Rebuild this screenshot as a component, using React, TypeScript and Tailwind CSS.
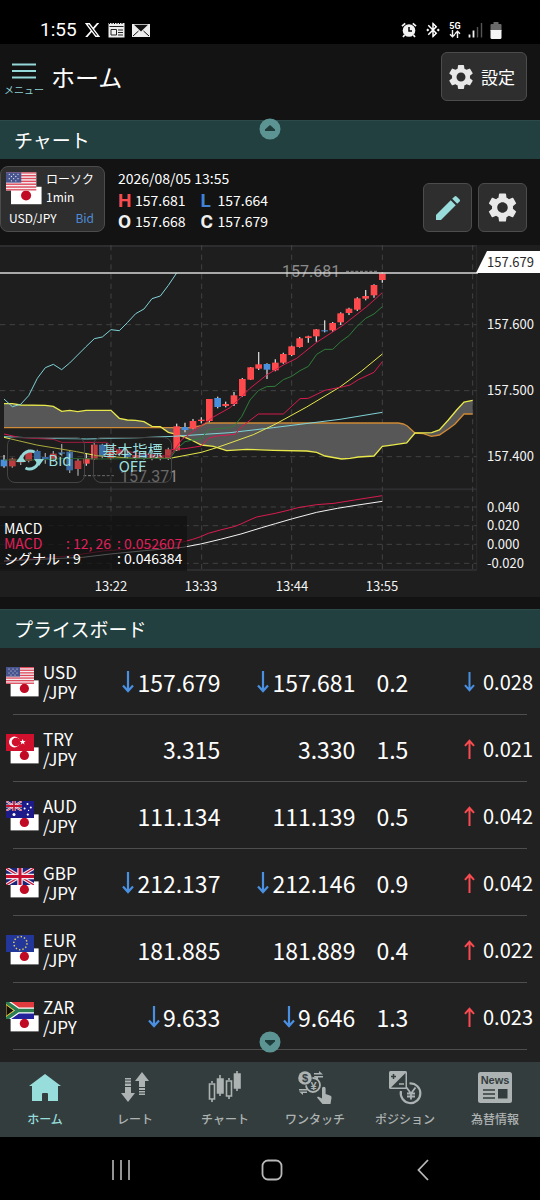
import type { ReactNode } from "react";
import { FaXTwitter } from "react-icons/fa6";
import { MdBluetoothConnected, MdEdit, MdSettings } from "react-icons/md";

type Dir = "up" | "down";
type Code = "USD" | "TRY" | "AUD" | "GBP" | "EUR" | "ZAR";
type Row = {
  code: Code;
  bid: string;
  ask: string;
  tick?: Dir;
  spread: string;
  dir: Dir;
  change: string;
};

const ROWS: Row[] = [
  { code: "USD", bid: "157.679", ask: "157.681", tick: "down", spread: "0.2", dir: "down", change: "0.028" },
  { code: "TRY", bid: "3.315", ask: "3.330", spread: "1.5", dir: "up", change: "0.021" },
  { code: "AUD", bid: "111.134", ask: "111.139", spread: "0.5", dir: "up", change: "0.042" },
  { code: "GBP", bid: "212.137", ask: "212.146", tick: "down", spread: "0.9", dir: "up", change: "0.042" },
  { code: "EUR", bid: "181.885", ask: "181.889", spread: "0.4", dir: "up", change: "0.022" },
  { code: "ZAR", bid: "9.633", ask: "9.646", tick: "down", spread: "1.3", dir: "up", change: "0.023" },
];

// x, body top, body bottom, wick top, wick bottom, colour (r = up, b = down)
type Candle = [number, number, number, number, number, "r" | "b"];

const CANDLES: Candle[] = [
  [12, 644, 664, 630, 668, "b"],
  [37, 641, 664, 638, 668, "r"],
  [62, 642, 652, 632, 660, "r"],
  [86, 619, 648, 614, 652, "r"],
  [112, 618, 642, 614, 648, "b"],
  [136, 636, 642, 624, 656, "b"],
  [160, 626, 642, 618, 650, "r"],
  [185, 622, 626, 597, 632, "b"],
  [209, 620, 676, 615, 684, "b"],
  [234, 647, 672, 640, 692, "r"],
  [259, 640, 656, 625, 662, "r"],
  [283, 599, 643, 594, 645, "r"],
  [307, 599, 634, 596, 640, "b"],
  [332, 616, 640, 610, 644, "r"],
  [358, 614, 628, 610, 632, "r"],
  [382, 626, 636, 620, 642, "b"],
  [407, 630, 640, 624, 644, "r"],
  [432, 628, 638, 622, 644, "b"],
  [456, 630, 642, 622, 646, "r"],
  [481, 634, 642, 628, 646, "r"],
  [505, 613, 642, 608, 645, "r"],
  [530, 544, 616, 536, 618, "r"],
  [555, 546, 555, 533, 562, "b"],
  [579, 528, 551, 522, 553, "r"],
  [604, 524, 528, 517, 535, "r"],
  [628, 462, 528, 462, 532, "r"],
  [653, 459, 486, 455, 490, "b"],
  [677, 477, 483, 470, 487, "r"],
  [702, 451, 477, 441, 483, "r"],
  [727, 402, 453, 399, 455, "r"],
  [752, 367, 404, 366, 405, "r"],
  [776, 358, 371, 321, 375, "r"],
  [801, 357, 374, 355, 402, "b"],
  [826, 353, 376, 343, 379, "r"],
  [850, 327, 353, 323, 356, "r"],
  [875, 304, 330, 302, 333, "r"],
  [899, 280, 306, 276, 308, "r"],
  [925, 274, 279, 272, 293, "r"],
  [949, 253, 274, 252, 290, "r"],
  [974, 256, 259, 226, 262, "b"],
  [998, 234, 256, 231, 260, "r"],
  [1022, 205, 232, 202, 240, "r"],
  [1047, 191, 204, 188, 210, "r"],
  [1072, 160, 194, 157, 198, "r"],
  [1097, 153, 161, 135, 166, "r"],
  [1122, 120, 151, 118, 158, "r"],
  [1147, 85, 105, 82, 113, "r"],
];

const SPAN_A =
  "12,476 37,476 62,480 136,481 160,484 185,499 209,496 233,500 258,496 333,496 358,520 382,525 407,526 432,530 456,544 481,545 505,562 530,568 555,577 580,588 604,600 640,604 680,617 740,613 820,616 920,618 950,622 975,633 1025,642 1050,640 1075,636 1122,633 1147,604 1170,601 1220,594 1245,564 1295,563 1318,555 1345,525 1370,495 1392,471 1418,466";
const SPAN_B =
  "1418,507 1392,507 1365,537 1345,552 1318,570 1294,574 1270,566 1245,564 1222,543 1210,537 1195,534 620,534 604,542 570,548 12,548";

const LINES: { color: string; points: string }[] = [
  {
    color: "#7fd3d8",
    points:
      "12,462 37,485 62,478 86,452 112,400 136,368 160,358 185,374 209,354 258,305 283,281 307,276 333,254 358,257 382,233 407,206 432,192 456,161 481,153 505,121 530,84",
  },
  { color: "#7fd3d8", points: "12,575 130,580 260,582 400,579 520,574 690,563 820,548 1020,523 1147,502" },
  {
    color: "#e8e84c",
    points: "12,577 110,600 230,620 290,632 400,640 510,640 604,622 650,608 690,594 760,569 825,538 920,486 1020,426 1085,378 1147,327",
  },
  {
    color: "#d81b4f",
    points:
      "12,567 60,578 160,583 185,592 320,592 350,614 420,626 510,634 545,584 604,542 640,516 690,488 720,460 750,430 800,390 850,360 890,340 950,292 1030,240 1100,185 1147,143",
  },
  {
    color: "#d81b4f",
    points:
      "510,614 555,611 604,603 625,580 650,573 705,568 725,545 775,507 850,507 900,461 925,460 975,436 1030,425 1050,420 1075,404 1122,382 1147,350",
  },
  {
    color: "#2f7d3b",
    points:
      "12,645 120,645 200,640 300,642 510,640 530,612 555,590 604,580 625,555 650,551 690,548 705,540 725,515 750,465 775,437 800,425 825,424 850,404 875,394 900,377 925,364 950,328 975,313 998,313 1022,290 1047,272 1070,245 1097,220 1122,207 1147,185",
  },
  {
    color: "#d81b4f",
    points:
      "12,950 41,945 207,933 310,918 413,910 548,891 578,883 602,875 625,865 661,855 702,845 723,837 744,827 770,816 826,805 868,795 894,788 950,779 1002,775 1064,765 1147,752",
  },
  {
    color: "#f4f4f4",
    points:
      "12,948 248,937 331,927 434,917 548,907 602,897 661,883 723,867 785,848 826,836 878,821 950,802 1012,790 1074,780 1147,769",
  },
];

const PRICE_LABELS = [
  { y: 84, text: "157.600" },
  { y: 150, text: "157.500" },
  { y: 216, text: "157.400" },
  { y: 267, text: "0.040" },
  { y: 285, text: "0.020" },
  { y: 304, text: "0.000" },
  { y: 323, text: "-0.020" },
];

const TIME_LABELS = [
  { x: 111, text: "13:22" },
  { x: 201, text: "13:33" },
  { x: 292, text: "13:44" },
  { x: 382, text: "13:55" },
];

const STARS = [
  [4, 2], [8, 2], [12, 2], [6, 4], [10, 4], [4, 6], [8, 6], [12, 6], [6, 8], [10, 8],
];

function UnionJack() {
  return (
    <>
      <rect width="28" height="17" fill="#1b2478" />
      <path d="M0 0 28 17M28 0 0 17" stroke="#f2e8f0" strokeWidth="3.4" />
      <path d="M0 0 28 17M28 0 0 17" stroke="#c8102e" strokeWidth="1.2" />
      <path d="M14 0v17M0 8.5h28" stroke="#f2e8f0" strokeWidth="5.4" />
      <path d="M14 0v17M0 8.5h28" stroke="#c8102e" strokeWidth="3" />
    </>
  );
}

function FlagArt({ code }: { code: Code }) {
  switch (code) {
    case "USD":
      return (
        <>
          <rect width="28" height="17" fill="#f6eef0" />
          {[0, 1, 2, 3, 4, 5, 6].map((i) => (
            <rect key={i} y={i * 2.6} width="28" height="1.3" fill="#dc4a5c" />
          ))}
          <rect width="14" height="9.6" fill="#46538c" />
          {STARS.map(([x, y], i) => (
            <circle key={i} cx={x - 1} cy={y} r="0.6" fill="#e4e6f2" />
          ))}
        </>
      );
    case "TRY":
      return (
        <>
          <rect width="28" height="17" fill="#d0102c" />
          <circle cx="8.4" cy="8" r="5.4" fill="#fff" />
          <circle cx="10" cy="8" r="4.3" fill="#d0102c" />
          <path d="m16.6 5 .9 2 2.2.1-1.8 1.3.7 2.1-1.9-1.2-1.9 1.3.6-2.2-1.7-1.3 2.2-.1z" fill="#fff" />
        </>
      );
    case "AUD":
      return (
        <>
          <rect width="28" height="17" fill="#1d1a8a" />
          <svg width="16" height="10" viewBox="0 0 28 17" preserveAspectRatio="none">
            <UnionJack />
          </svg>
          <g fill="#fff">
            <circle cx="8" cy="13.4" r="1.5" />
            <circle cx="21.5" cy="3" r="1" />
            <circle cx="18.6" cy="7.4" r="1" />
            <circle cx="24.8" cy="6.4" r="1" />
            <circle cx="22.6" cy="9.4" r="0.6" />
            <circle cx="21.8" cy="13.6" r="1.1" />
          </g>
        </>
      );
    case "GBP":
      return <UnionJack />;
    case "EUR":
      return (
        <>
          <rect width="28" height="17" fill="#23379b" />
          <circle cx="14.4" cy="8.2" r="6.6" fill="none" stroke="#e3cf5a" strokeWidth="1.5" strokeDasharray="1.4 2.056" />
        </>
      );
    case "ZAR":
      return (
        <>
          <rect width="28" height="17" fill="#23239c" />
          <rect width="28" height="6" fill="#e03a3e" />
          <path d="M0 0 12 8.5 0 17M11 8.5h17" fill="none" stroke="#fff" strokeWidth="6" />
          <path d="M0 0 12 8.5 0 17M11 8.5h17" fill="none" stroke="#2b7d52" strokeWidth="3.6" />
          <path d="M0 2.6 8 8.5 0 14.4z" fill="#111" stroke="#e8b923" strokeWidth="1" />
        </>
      );
  }
}

function FlagPair({ code, className }: { code: Code; className: string }) {
  return (
    <svg viewBox="0 0 33 30" className={className} aria-hidden="true">
      <rect x="4.6" y="13.4" width="28" height="16" fill="#fff" />
      <circle cx="18.4" cy="21.4" r="4.6" fill="#c10a23" />
      <svg width="28" height="17" viewBox="0 0 28 17">
        <FlagArt code={code} />
      </svg>
    </svg>
  );
}

function Arrow({ dir, className }: { dir: Dir; className: string }) {
  return (
    <svg viewBox="0 0 12 22" fill="none" strokeWidth="2.2" className={className} aria-hidden="true">
      {dir === "down" ? (
        <path d="M6 0v20M1 14.5l5 5.5 5-5.5" stroke="#4a90e2" />
      ) : (
        <path d="M6 22V2M1 7.500l5-5.500 5 5.500" stroke="#fa4b50" />
      )}
    </svg>
  );
}

function StatusBar() {
  return (
    <div className="flex h-11 items-center justify-between bg-black pt-4 pr-[38px] pl-10 text-white">
      <div className="flex items-center gap-[7px]">
        <span className="font-['Roboto',sans-serif] text-[19px] leading-6">1:55</span>
        <FaXTwitter className="h-[18px] w-[17px]" />
        <svg viewBox="0 0 17 16" className="h-4 w-[17px]" aria-hidden="true">
          <path d="M.5 1h16v14.500h-16z" fill="#eee" />
          <path d="M1 1.500h15" stroke="#000" strokeDasharray="1 1.5" />
          <path d="M1.500 4.500h14" stroke="#222" />
          <path d="M3 7.500h5.500v5.500H3zM10 8H15M10 10.500H15M10 13H15" stroke="#222" fill="none" />
        </svg>
        <svg viewBox="0 0 18 14" className="h-[14px] w-[18px]" aria-hidden="true">
          <path d="M0 1h18v13H0z" fill="#eee" />
          <path d="m1 13 5.500-5M17 13l-5.500-5" stroke="#111" />
          <path d="M2 1.800h14L9 8.500z" fill="#111" />
        </svg>
      </div>
      <div className="flex items-center gap-[7px]">
        <svg viewBox="0 0 16 16" className="h-4 w-4" aria-hidden="true">
          <circle cx="8" cy="8.500" r="6.300" fill="#f2f2f2" />
          <path d="M8 5v4h3" stroke="#000" strokeWidth="1.500" fill="none" />
          <path d="M1 4.200 4.200 1.300M15 4.200l-3.200-2.900M3.600 13 2 15M12.400 13l1.600 2" stroke="#f2f2f2" strokeWidth="1.800" />
        </svg>
        <MdBluetoothConnected className="h-[18px] w-[18px]" />
        <div className="flex flex-col items-center">
          <span className="font-['Roboto',sans-serif] text-[9px] leading-[8px] font-bold">5G</span>
          <svg viewBox="0 0 12 8" className="h-2 w-3" fill="none" stroke="#f2f2f2" strokeWidth="1.400" aria-hidden="true">
            <path d="M3.500 0v6.500M1 4.200l2.500 2.600L6 4.200M8.500 8V1.500M6 3.800l2.500-2.600L11 3.800" />
          </svg>
        </div>
        <svg viewBox="0 0 15 16" className="h-4 w-[15px]" aria-hidden="true">
          <path d="M1.500 15.500v-3M5.500 15.500v-7" stroke="#f2f2f2" strokeWidth="1.800" />
          <path d="M9.500 15.500V5M13.500 15.500V1" stroke="#555" strokeWidth="1.400" />
        </svg>
        <svg viewBox="0 0 12 17" className="h-[17px] w-3" aria-hidden="true">
          <path d="M3.500 0h5v2H10.500a1 1 0 0 1 1 1v6H.5V3a1 1 0 0 1 1-1h2z" fill="#6a6a6a" />
          <path d="M.5 8h11v7.500a1.500 1.500 0 0 1-1.500 1.500H2a1.500 1.500 0 0 1-1.500-1.500z" fill="#f4f4f4" />
        </svg>
      </div>
    </div>
  );
}

function Header() {
  return (
    <header className="flex h-[76px] items-start justify-between pr-[13px] pl-[3px]">
      <div className="flex items-start gap-[6px] pt-[18px]">
        <button type="button" className="flex w-[42px] flex-col items-center text-[#8ccfd0]">
          <svg viewBox="0 0 24 18" className="h-[18px] w-6" stroke="#95d8d8" strokeWidth="2" aria-hidden="true">
            <path d="M0 2.500h24M0 9h24M0 15.500h24" />
          </svg>
          <span className="text-[10px] leading-5 whitespace-nowrap">メニュー</span>
        </button>
        <h1 className="text-[24px] leading-[30px] text-white">ホーム</h1>
      </div>
      <button
        type="button"
        className="mt-2 flex h-[49px] w-[86px] items-center gap-[5px] rounded-md border border-[#4c4c4c] bg-[#2e2e2e] pl-1 text-[17px] text-white"
      >
        <MdSettings className="h-[30px] w-[30px] text-[#e8e8e8]" />
        設定
      </button>
    </header>
  );
}

function SectionBar({ title, children }: { title: string; children?: ReactNode }) {
  return (
    <div className="relative flex h-[39px] items-center border-t border-[#2b4a49] bg-[#22403f] px-[14px]">
      <h2 className="text-[19px] leading-7 text-white">{title}</h2>
      {children}
    </div>
  );
}

function Handle({ dir, className }: { dir: Dir; className: string }) {
  return (
    <button type="button" aria-label={dir} className={className}>
      <svg viewBox="0 0 22 22" className="h-[22px] w-[22px]" aria-hidden="true">
        <circle cx="11" cy="11" r="10.500" fill="#5c9493" />
        {dir === "up" ? (
          <path d="M6 13v-1.500l5-4.500 5 4.500V13z" fill="#1f3b3a" />
        ) : (
          <path d="M6 9v1.500l5 4.500 5-4.500V9z" fill="#1f3b3a" />
        )}
      </svg>
    </button>
  );
}

function Ohlc({ mark, color, value }: { mark: string; color: string; value: string }) {
  return (
    <div className="flex items-center gap-1">
      <dt className={`w-[13px] font-['Roboto',sans-serif] text-[19px] leading-[21px] font-bold ${color}`}>{mark}</dt>
      <dd className="text-[14px] leading-[21px]">{value}</dd>
    </div>
  );
}

function ChartInfo() {
  return (
    <div className="flex h-[86px] items-start justify-between pr-[13px] text-white">
      <div className="flex items-start gap-[13px] pt-[7px]">
        <button
          type="button"
          className="flex h-[66px] w-[105px] flex-col justify-between rounded-lg border border-[#4c4c4c] bg-[#2e2e2e] pt-[5px] pr-2 pb-1 pl-[5px] text-left text-[12px]"
        >
          <span className="flex items-start gap-1">
            <FlagPair code="USD" className="h-[33px] w-9" />
            <span className="flex flex-col whitespace-nowrap">
              <span className="leading-[14px]">ローソク</span>
              <span className="leading-[22px]">1min</span>
            </span>
          </span>
          <span className="flex justify-between pr-[2px] pl-[3px] leading-[20px]">
            <span>USD/JPY</span>
            <span className="text-[#4f8bd8]">Bid</span>
          </span>
        </button>
        <div>
          <p className="text-[14px] leading-6">2026/08/05 13:55</p>
          <dl className="grid grid-cols-[auto_auto] gap-x-[15px]">
            <Ohlc mark="H" color="text-[#f84c50]" value="157.681" />
            <Ohlc mark="L" color="text-[#3f82d8]" value="157.664" />
            <Ohlc mark="O" color="text-[#f0f0f0]" value="157.668" />
            <Ohlc mark="C" color="text-[#f0f0f0]" value="157.679" />
          </dl>
        </div>
      </div>
      <div className="flex gap-[6px] pt-6">
        <button
          type="button"
          aria-label="描画"
          className="flex h-[49px] w-[49px] items-center justify-center rounded-md border border-[#4c4c4c] bg-[#2e2e2e]"
        >
          <MdEdit className="h-8 w-8 text-[#98dcdb]" />
        </button>
        <button
          type="button"
          aria-label="チャート設定"
          className="flex h-[49px] w-[49px] items-center justify-center rounded-md border border-[#4c4c4c] bg-[#2e2e2e]"
        >
          <MdSettings className="h-[35px] w-[35px] text-[#e8e8e8]" />
        </button>
      </div>
    </div>
  );
}

function Chart() {
  return (
    <div className="relative bg-[#1e1e1e]">
      <svg viewBox="0 0 540 352" className="block w-full font-['Noto_Sans_CJK_JP',sans-serif]" role="img" aria-label="USD/JPY">
        {/* plot coordinates are three units per pixel */}
        <g transform="scale(0.33333)" fill="none">
          <path d="M0 3h1430M0 733h1430M0 975h1430" stroke="#2d2d2f" strokeWidth="6" />
          <path d="M1430 0v975" stroke="#2d2d2f" strokeWidth="3" />
          <path
            d="M333 0v972M605 0v972M875 0v972M1147 0v972M1418 0v972M0 239h1430M0 437h1430M0 635h1430M0 786h1430M0 842h1430M0 898h1430M0 955h1430"
            stroke="#424242"
            strokeWidth="3"
            strokeDasharray="16 13"
          />
          <polygon points={`${SPAN_A} ${SPAN_B}`} fill="#575757" />
          <polyline points={SPAN_B} stroke="#d08a35" strokeWidth="4" />
          <polyline points={SPAN_A} stroke="#e8e84c" strokeWidth="4" />
          {CANDLES.map(([x, top, bottom, high, low, c]) => (
            <g key={x}>
              <path d={`M${x} ${high}V${low}`} stroke="#d0d0d0" strokeWidth="4" />
              <rect x={x - 10} y={top} width="20" height={bottom - top} fill={c === "r" ? "#ff4a4d" : "#4a8fdc"} />
            </g>
          ))}
          {LINES.map((line) => (
            <polyline key={line.points} points={line.points} stroke={line.color} strokeWidth="3" />
          ))}
          <path d="M1038 79h96M250 692h92" stroke="#8a8a8a" strokeWidth="3" strokeDasharray="9 5" />
        </g>
        <g fill="#8a8a8a" fontSize="16" fontFamily="Roboto, sans-serif">
          <text x="282" y="32">157.681</text>
          <text x="120" y="237">157.371</text>
        </g>
        <path d="M0 28h478" stroke="#d8d8d8" strokeWidth="1.500" />
        <path d="M476 28 487 6h53v22z" fill="#fff" />
        <g fontSize="13">
          <text x="487" y="22" fill="#2a2a2a">157.679</text>
          {PRICE_LABELS.map((l) => (
            <text key={l.text} x="487" y={l.y} fill="#f4f4f4">{l.text}</text>
          ))}
          {TIME_LABELS.map((l) => (
            <text key={l.text} x={l.x} y="346" fill="#f4f4f4" textAnchor="middle">{l.text}</text>
          ))}
        </g>
      </svg>
      <div className="absolute top-48 left-[7px] flex gap-2 text-[15px] leading-4 text-[#9adfdf]">
        <button
          type="button"
          className="flex h-[46px] w-[78px] items-center justify-center gap-1 rounded-lg border border-[#444] bg-[#1e1e1e]/30 pr-1"
        >
          <svg viewBox="0 0 28 24" className="h-6 w-7" fill="none" stroke="#95d8d8" strokeWidth="3" aria-hidden="true">
            <path d="M22.500 13a9 9 0 0 1-13 7M5.500 11a9 9 0 0 1 13-7" />
            <path d="M0 14h10l-5-7zM18 11h10l-5 7z" fill="#95d8d8" stroke="none" />
          </svg>
          Bid
        </button>
        <button
          type="button"
          className="flex h-[46px] w-[79px] flex-col items-center justify-center rounded-lg border border-[#444] bg-[#1e1e1e]/30 pb-1"
        >
          <span>基本指標</span>
          <span>OFF</span>
        </button>
      </div>
      <div className="absolute top-[271px] left-0 w-[187px] bg-[#101010]/70 py-[5px] pl-1 text-[14px] leading-[15px] text-white">
        <div>MACD</div>
        <div className="grid grid-cols-[62px_51px_auto] text-[#e0205a]">
          <span>MACD</span>
          <span>: 12, 26</span>
          <span>: 0.052607</span>
        </div>
        <div className="grid grid-cols-[62px_51px_auto]">
          <span className="whitespace-nowrap">シグナル</span>
          <span>: 9</span>
          <span>: 0.046384</span>
        </div>
      </div>
    </div>
  );
}

function Price({ value, tick }: { value: string; tick?: Dir }) {
  return (
    <span className="flex items-center justify-end gap-[3px]">
      {tick && <Arrow dir={tick} className="h-[22px] w-3" />}
      {value}
    </span>
  );
}

function PriceBoard() {
  return (
    <div className="relative bg-[#212121] pb-3">
      <table className="w-full table-fixed text-right text-[23px] leading-8 text-white" aria-label="プライスボード">
        <colgroup>
          <col className="w-[19%]" />
          <col className="w-[22%]" />
          <col className="w-[25%]" />
          <col className="w-[10%]" />
          <col className="w-[24%]" />
        </colgroup>
        <tbody>
          {ROWS.map((row) => (
            <tr
              key={row.code}
              className="relative h-[67px] after:absolute after:inset-x-[13px] after:bottom-0 after:h-px after:bg-[#4e4e4e] after:content-['']"
            >
              <th scope="row" className="text-left font-normal">
                <span className="flex items-center gap-1 pl-[6px]">
                  <FlagPair code={row.code} className="h-[30px] w-[33px]" />
                  <span className="text-[17px] leading-5">
                    {row.code}
                    <br />
                    /JPY
                  </span>
                </span>
              </th>
              <td className="pr-px">
                <Price value={row.bid} tick={row.tick} />
              </td>
              <td className="pr-px">
                <Price value={row.ask} tick={row.tick} />
              </td>
              <td className="pr-[2px]">{row.spread}</td>
              <td className="pr-[7px] text-[20px]">
                <span className="flex items-center justify-end gap-2">
                  <Arrow dir={row.dir} className="h-5 w-[11px]" />
                  {row.change}
                </span>
              </td>
            </tr>
          ))}
        </tbody>
      </table>
      <Handle dir="down" className="absolute bottom-[9px] left-1/2 -translate-x-1/2" />
    </div>
  );
}

const TABS: { label: string; icon: ReactNode }[] = [
  {
    label: "ホーム",
    icon: <path d="M17 3 33 15h-3v15H20v-7a1 1 0 0 0-1-1h-4a1 1 0 0 0-1 1v7H4V15H1z" />,
  },
  {
    label: "レート",
    icon: (
      <path d="M7 7h6v1.500H7zM7 9.500h6v2H7zM7 12.500h6v2.500H7zM7 16h6v6h4l-7 9-7-9h4zM24 1l7 9h-4v6h-6v-6h-4zM21 17h6v2h-6zM21 20h6v1.500h-6zM21 22.500h6V24h-6z" />
    ),
  },
  {
    label: "チャート",
    icon: (
      <g stroke="currentColor" strokeWidth="1.600">
        <path d="M4 10v2M4 28v3M12 4v21M21 7v2M21 25v3M29 0v20" />
        <path d="M1.500 13h5v15h-5zM18.500 10h5v15h-5z" fill="none" />
        <path d="M9.500 8h5.500v14H9.500zM26.500 3H32v14h-5.500z" />
      </g>
    ),
  },
  {
    label: "ワンタッチ",
    icon: (
      <>
        <circle cx="15" cy="14" r="7" fill="#343d3d" stroke="currentColor" strokeWidth="1.800" />
        <text x="15.500" y="19" textAnchor="middle" fontSize="11" fontWeight="700">¥</text>
        <circle cx="7" cy="7" r="7.500" fill="#343d3d" />
        <circle cx="7" cy="7" r="6.800" />
        <text x="7" y="11" textAnchor="middle" fontSize="11" fontWeight="700" fill="#343d3d">$</text>
        <path d="M16 2h5V0l4 3.500h-9zM25 5v1.500h-5V9l-4-3.500V5zM1 18h8v1.500H1zM1 20.500h8V22H5v2z" />
        <path d="M24 17.500a1.800 1.800 0 0 1 3.600 0V23l4.400 1.500a2 2 0 0 1 1.500 2.200L32.500 33h-8L19 26.500l1-1 4 2z" />
      </>
    ),
  },
  {
    label: "ポジション",
    icon: (
      <>
        <rect x="1" y="0" width="18" height="18" rx="1.500" />
        <path d="M17.500 2v14.500H3z" fill="#343d3d" />
        <path d="M3 5.500h5M5.500 3v5" stroke="#343d3d" strokeWidth="1.500" />
        <path d="M11 13h5" stroke="currentColor" strokeWidth="1.500" />
        <path d="M21.500 12.500a9.800 9.800 0 1 1-8.500 7.500" fill="none" stroke="currentColor" strokeWidth="2.200" />
        <path d="m18.500 16.500 4.500 6 4.500-6M23 22v6.500M19 22.500h8M19 25.500h8" fill="none" stroke="currentColor" strokeWidth="1.800" />
      </>
    ),
  },
  {
    label: "為替情報",
    icon: (
      <>
        <rect x="0" y="1" width="34" height="31" rx="2.500" />
        <text x="17" y="13" textAnchor="middle" fontSize="11" fontWeight="700" fill="#343d3d">News</text>
        <path d="M5 19h12M5 23h12M5 27h12" stroke="#343d3d" strokeWidth="1.600" />
        <rect x="20" y="18" width="9.500" height="9.500" fill="#343d3d" />
      </>
    ),
  },
];

function TabBar() {
  return (
    <nav className="grid h-[75px] grid-cols-6 bg-[#343d3d]">
      {TABS.map((tab, i) => (
        <a
          key={tab.label}
          href="#"
          className={`flex flex-col items-center gap-1 pt-[9px] text-[12px] font-medium whitespace-nowrap ${i === 0 ? "text-[#97dddc]" : "text-[#adb3b3]"}`}
        >
          <svg viewBox="0 0 34 34" fill="currentColor" className="h-[34px] w-[34px] font-['Liberation_Sans',sans-serif]" aria-hidden="true">
            {tab.icon}
          </svg>
          <span className="leading-5">{tab.label}</span>
        </a>
      ))}
    </nav>
  );
}

function SystemNav() {
  return (
    <div className="grid h-[63px] grid-cols-3 place-items-center bg-black pt-[3px] pr-[42px] pl-[46px]">
      <button type="button" aria-label="履歴">
        <svg viewBox="0 0 20 20" className="h-5 w-5" stroke="#b8b8b8" strokeWidth="1.600" aria-hidden="true">
          <path d="M2 0v20M10 0v20M18 0v20" />
        </svg>
      </button>
      <button type="button" aria-label="ホームへ">
        <svg viewBox="0 0 22 22" className="h-[22px] w-[22px]" fill="none" stroke="#b8b8b8" strokeWidth="1.800" aria-hidden="true">
          <rect x="1.500" y="1.500" width="19" height="19" rx="5.500" />
        </svg>
      </button>
      <button type="button" aria-label="戻る">
        <svg viewBox="0 0 12 22" className="h-[22px] w-3" fill="none" stroke="#b8b8b8" strokeWidth="1.800" aria-hidden="true">
          <path d="M11 1 1.500 11 11 21" />
        </svg>
      </button>
    </div>
  );
}

export default function App() {
  return (
    <div className="w-full bg-[#131313] font-['Noto_Sans_CJK_JP',sans-serif]">
      <StatusBar />
      <Header />
      <SectionBar title="チャート">
        <Handle dir="up" className="absolute -top-[3px] left-1/2 -translate-x-1/2" />
      </SectionBar>
      <ChartInfo />
      <Chart />
      <div className="pt-3">
        <SectionBar title="プライスボード" />
      </div>
      <PriceBoard />
      <TabBar />
      <SystemNav />
    </div>
  );
}
